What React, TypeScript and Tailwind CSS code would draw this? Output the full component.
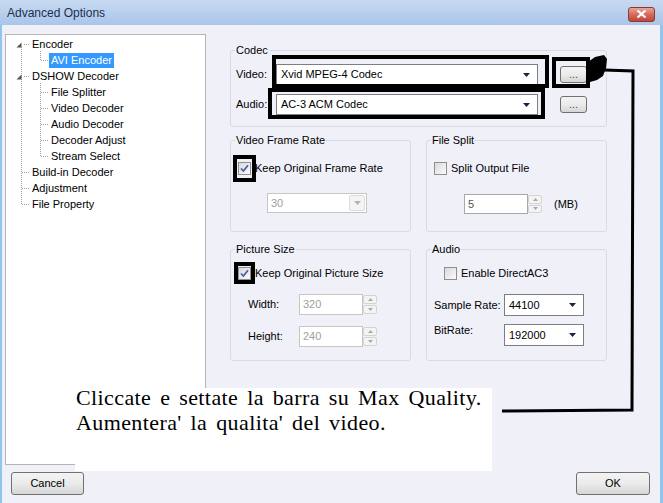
import React from 'react';

const DropArrow: React.FC<{ color?: string }> = ({ color = '#1c2340' }) => (
  <svg width="7" height="4" viewBox="0 0 7 4">
    <path d="M0 0h7L3.5 4z" fill={color} />
  </svg>
);

const CheckBox: React.FC<{ checked?: boolean }> = ({ checked }) => (
  <span className="w-[13px] h-[13px] shrink-0 border border-[#8f8f8f] bg-gradient-to-br from-[#dadada] to-[#fafafa] flex items-center justify-center">
    {checked && (
      <svg width="9" height="9" viewBox="0 0 9 9">
        <path d="M1 4.5L3.4 7L8 1.2" stroke="#4a5cad" strokeWidth="1.8" fill="none" />
      </svg>
    )}
  </span>
);

const Combo: React.FC<{ value: string; className: string }> = ({ value, className }) => (
  <div className={`bg-white border border-[#7b7e85] flex items-center justify-between pl-[4px] pr-[7px] ${className}`}>
    <span>{value}</span>
    <DropArrow />
  </div>
);

const Spinner: React.FC = () => (
  <div className="w-[14px] h-full flex flex-col gap-[1px] py-[1px]">
    {[0, 1].map((i) => (
      <div key={i} className="flex-1 border border-[#d4d4d4] rounded-[2px] bg-[#f4f4f4] flex items-center justify-center">
        <svg width="5" height="3" viewBox="0 0 5 3">
          <path d={i === 0 ? 'M0 3h5L2.5 0z' : 'M0 0h5L2.5 3z'} fill="#a8a8a8" />
        </svg>
      </div>
    ))}
  </div>
);

const SpinField: React.FC<{ value: string; className: string; disabled?: boolean }> = ({ value, className, disabled }) => (
  <div className={`flex ${className}`}>
    <div className={`flex-1 border bg-white pl-[3px] flex items-center ${disabled ? 'border-[#c6c6c6] text-[#a0a0a0]' : 'border-[#a9a9a9] text-[#555]'}`}>
      {value}
    </div>
    <Spinner />
  </div>
);

const WinButton: React.FC<{ label: string; className: string }> = ({ label, className }) => (
  <button className={`rounded-[3px] border border-[#707070] bg-gradient-to-b from-[#f3f3f3] via-[#ebebeb] to-[#d6d6d6] flex items-center justify-center text-[11px] ${className}`}>
    {label}
  </button>
);

const Group: React.FC<{ title: string; className?: string; children: React.ReactNode }> = ({ title, className = '', children }) => (
  <fieldset className="border border-[#d5dce4] rounded-[3px]">
    <legend className="ml-[4px] px-[1px] leading-[13px]">{title}</legend>
    <div className={className}>{children}</div>
  </fieldset>
);

const treeItems: { label: string; level: number; selected?: boolean }[] = [
  { label: 'Encoder', level: 0 },
  { label: 'AVI Encoder', level: 1, selected: true },
  { label: 'DSHOW Decoder', level: 0 },
  { label: 'File Splitter', level: 1 },
  { label: 'Video Decoder', level: 1 },
  { label: 'Audio Decoder', level: 1 },
  { label: 'Decoder Adjust', level: 1 },
  { label: 'Stream Select', level: 1 },
  { label: 'Build-in Decoder', level: 0 },
  { label: 'Adjustment', level: 0 },
  { label: 'File Property', level: 0 },
];

const TreeLines: React.FC = () => {
  // page coords shifted by the tree's padding box origin (6, 35)
  const dot = { stroke: '#a3a3a3', strokeWidth: 1, strokeDasharray: '1 1' };
  const h = (y: number, x1: number, x2: number) => (
    <line key={`h${y}${x1}`} x1={x1 - 6} y1={y - 35 + 0.5} x2={x2 - 6} y2={y - 35 + 0.5} {...dot} />
  );
  return (
    <svg className="absolute inset-0 pointer-events-none" width="199" height="429">
      <line x1={15.5} y1={12} x2={15.5} y2={170} {...dot} />
      <line x1={34.5} y1={16} x2={34.5} y2={26} {...dot} />
      <line x1={34.5} y1={48} x2={34.5} y2={122} {...dot} />
      {h(44, 24, 30)}
      {h(76, 24, 30)}
      {[60, 92, 108, 124, 140, 156].map((y) => h(y, 41, 48))}
      {[172, 188, 204].map((y) => h(y, 22, 30))}
      <path d="M10.5 12.5L15.5 7.5V12.5Z" fill="#555" />
      <path d="M10.5 44.5L15.5 39.5V44.5Z" fill="#555" />
    </svg>
  );
};

const App: React.FC = () => {
  return (
    <div className="w-[663px] h-[503px] relative overflow-hidden bg-[#8fc6ee] font-['Liberation_Sans',Arial,sans-serif] text-[11px] text-black">
      <div className="h-full flex flex-col ml-[2px] mr-[3px] mb-[4px]">
        {/* title bar */}
        <div className="h-[25px] -ml-[2px] -mr-[3px] pl-[7px] pr-[8px] flex items-center justify-between bg-gradient-to-b from-[#c8daf1] to-[#a9c5ea]">
          <span className="text-[12px] text-[#1b2f4d]">Advanced Options</span>
          <div className="w-[27px] h-[15px] mt-[3px] rounded-[3px] border border-[#8a3a34] bg-gradient-to-b from-[#e8a696] via-[#d56a5a] to-[#c0453a] flex items-center justify-center">
            <svg width="11" height="8" viewBox="0 0 11 8">
              <path d="M1.5 0.5L9.5 7.5M9.5 0.5L1.5 7.5" stroke="white" strokeWidth="2.2" />
            </svg>
          </div>
        </div>

        <div className="flex-1 bg-[#f0f0f8] flex flex-col">
          <div className="flex pt-[9px] pl-[3px]">
            {/* tree */}
            <div className="relative w-[201px] h-[431px] bg-white border border-[#b5b5b5] pt-[1px]">
              <TreeLines />
              {treeItems.map((it) => (
                <div key={it.label} className={`h-[16px] flex items-center ${it.level === 0 ? 'pl-[24px]' : 'pl-[43px]'}`}>
                  <span className={`leading-[15px] px-[2px] ${it.selected ? 'bg-[#3399ff] text-white' : ''}`}>{it.label}</span>
                </div>
              ))}
            </div>

            {/* right panel */}
            <div className="ml-[24px] w-[377px] mt-[10px] flex flex-col">
              <Group title="Codec" className="pl-[5px] pt-[7px] pb-[11px]">
                <div className="flex items-center h-[21px]">
                  <span className="w-[40px]">Video:</span>
                  <Combo value="Xvid MPEG-4 Codec" className="w-[262px] h-[21px]" />
                  <WinButton label="..." className="ml-[22px] w-[27px] h-[17px] text-[#555]" />
                </div>
                <div className="flex items-center h-[21px] mt-[9px]">
                  <span className="w-[40px]">Audio:</span>
                  <Combo value="AC-3 ACM Codec" className="w-[262px] h-[21px]" />
                  <WinButton label="..." className="ml-[22px] w-[27px] h-[17px] text-[#555]" />
                </div>
              </Group>

              <div className="grid grid-cols-2 gap-[15px] mt-[7px]">
                <Group title="Video Frame Rate" className="pl-[7px] pt-[15px] pb-[17px]">
                  <div className="flex items-center gap-[4px] h-[13px]">
                    <CheckBox checked />
                    <span>Keep Original Frame Rate</span>
                  </div>
                  <div className="ml-[29px] mt-[18px] w-[100px] h-[20px] border border-[#c6c6c6] bg-white flex items-center justify-between pl-[3px] pr-[1px] text-[#a0a0a0]">
                    <span>30</span>
                    <div className="w-[16px] h-[16px] border border-[#dcdcdc] rounded-[2px] bg-[#f4f4f4] flex items-center justify-center">
                      <DropArrow color="#b3b3b3" />
                    </div>
                  </div>
                </Group>
                <Group title="File Split" className="pl-[7px] pt-[15px] pb-[17px]">
                  <div className="flex items-center gap-[4px] h-[13px]">
                    <CheckBox />
                    <span>Split Output File</span>
                  </div>
                  <div className="flex items-center mt-[19px] ml-[30px]">
                    <SpinField value="5" className="w-[78px] h-[20px]" />
                    <span className="ml-[12px]">(MB)</span>
                  </div>
                </Group>
              </div>

              <div className="grid grid-cols-2 gap-[15px] mt-[11px]">
                <Group title="Picture Size" className="pl-[7px] pt-[11px] pb-[13px]">
                  <div className="flex items-center gap-[4px] h-[13px]">
                    <CheckBox checked />
                    <span>Keep Original Picture Size</span>
                  </div>
                  <div className="flex items-center mt-[14px] ml-[10px]">
                    <span className="w-[51px]">Width:</span>
                    <SpinField value="320" className="w-[78px] h-[21px]" disabled />
                  </div>
                  <div className="flex items-center mt-[11px] ml-[10px]">
                    <span className="w-[51px]">Height:</span>
                    <SpinField value="240" className="w-[78px] h-[21px]" disabled />
                  </div>
                </Group>
                <Group title="Audio" className="pl-[7px] pt-[11px] pb-[13px]">
                  <div className="flex items-center gap-[4px] h-[13px] ml-[10px]">
                    <CheckBox />
                    <span>Enable DirectAC3</span>
                  </div>
                  <div className="flex items-center mt-[14px]">
                    <span className="w-[70px]">Sample Rate:</span>
                    <Combo value="44100" className="w-[80px] h-[22px]" />
                  </div>
                  <div className="flex items-start mt-[8px]">
                    <span className="w-[70px] leading-[13px]">BitRate:</span>
                    <Combo value="192000" className="w-[80px] h-[22px]" />
                  </div>
                </Group>
              </div>
            </div>
          </div>

          <div className="flex justify-between mt-[7px] pl-[9px] pr-[10px]">
            <WinButton label="Cancel" className="w-[73px] h-[23px]" />
            <WinButton label="OK" className="w-[74px] h-[23px]" />
          </div>
        </div>
      </div>

      {/* note pasted on the screenshot */}
      <div className="absolute left-[75px] top-[388px] w-[417px] h-[83px] bg-white pl-[1px]">
        <p className="-mt-[3px] font-['Liberation_Serif','Times_New_Roman',serif] text-[22px] leading-[25px] tracking-[0.4px] [word-spacing:3px] text-black">
          Cliccate e settate la barra su Max Quality.
          <br />
          Aumentera' la qualita' del video.
        </p>
      </div>

      {/* hand-drawn marks */}
      <svg className="absolute inset-0 pointer-events-none" width="663" height="503">
        <g fill="none" stroke="#000" strokeWidth="4">
          <rect x="274" y="57" width="273" height="29" />
          <rect x="270" y="90" width="273" height="27" />
          <rect x="554" y="59" width="34" height="27" />
          <rect x="235" y="157" width="19" height="23" />
          <rect x="236" y="264" width="17" height="18" />
        </g>
        <path d="M588 62L595 57L604 55L607 59L606 68L603 76L597 80L590 82Z" fill="#000" />
        <polyline points="604,70 633,71 632,410 502,411" fill="none" stroke="#000" strokeWidth="3" />
      </svg>
    </div>
  );
};

export default App;
